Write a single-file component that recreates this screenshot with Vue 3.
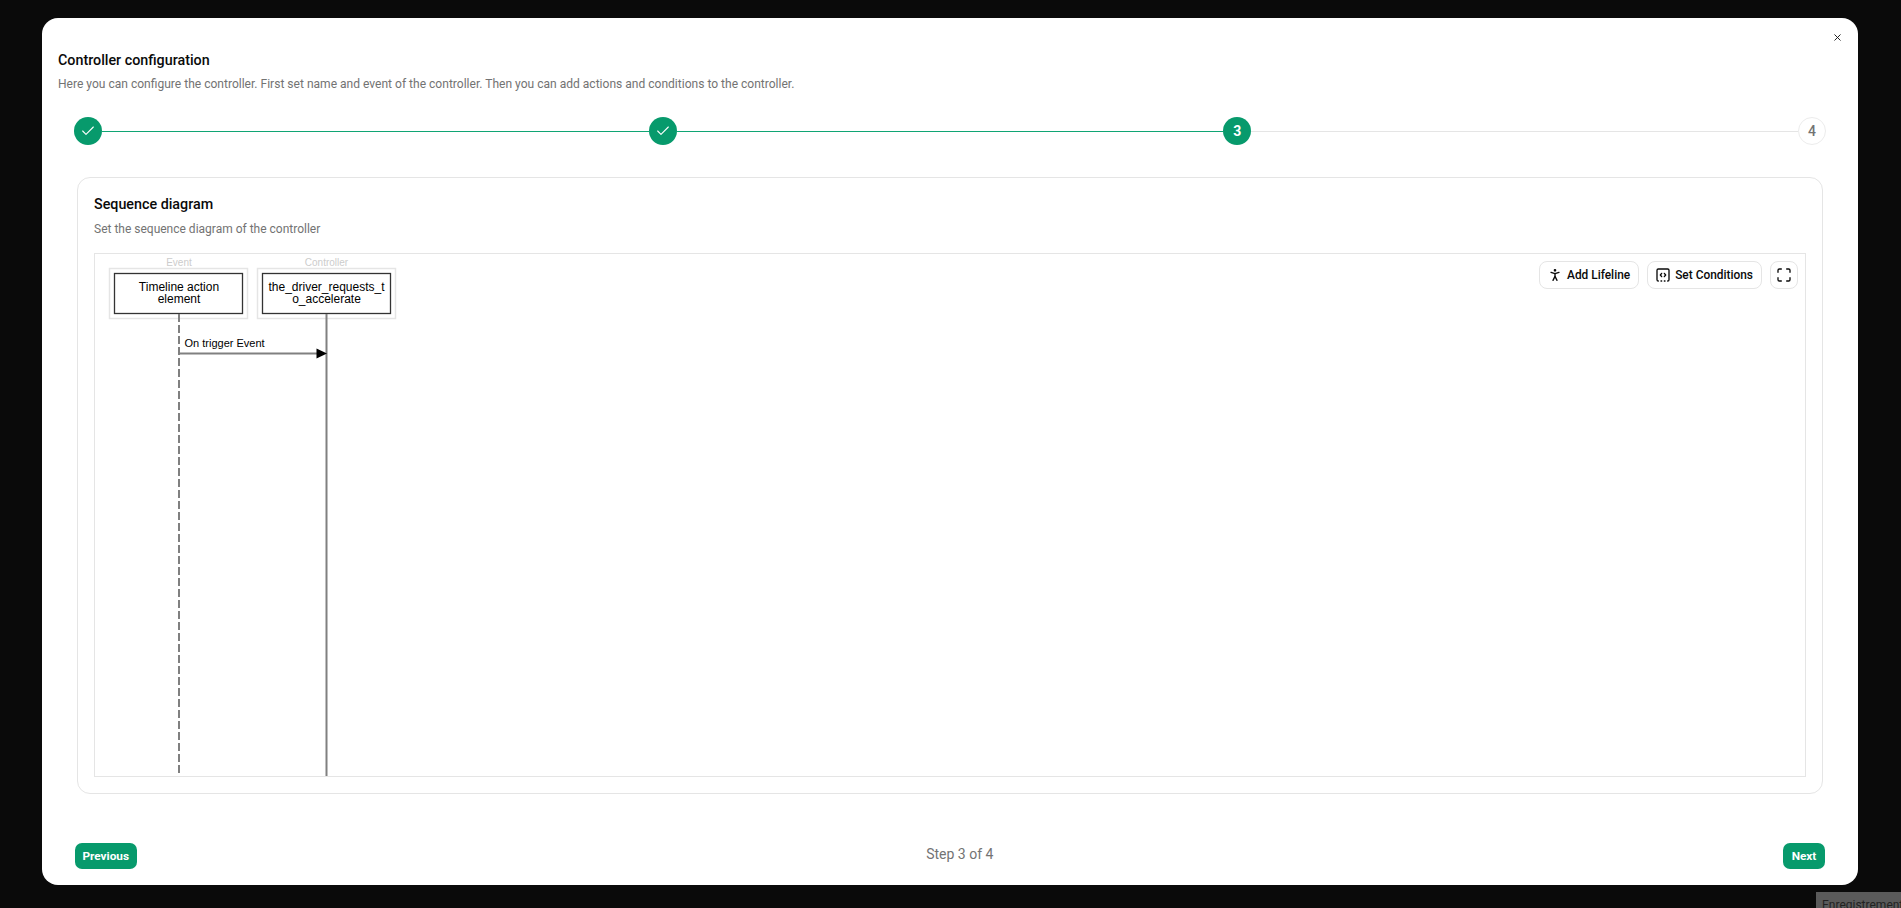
<script setup>
const steps = [
  { id: 1, state: 'done' },
  { id: 2, state: 'done' },
  { id: 3, state: 'current' },
  { id: 4, state: 'todo' }
]
</script>

<template>
  <div class="page">
    <div class="modal">
      <button class="close" aria-label="Close">
        <svg viewBox="0 0 24 24" width="11" height="11" fill="none" stroke="currentColor" stroke-width="2" stroke-linecap="round"><path d="M18 6 6 18"/><path d="m6 6 12 12"/></svg>
      </button>
      <header class="head">
        <h2>Controller configuration</h2>
        <p>Here you can configure the controller. First set name and event of the controller. Then you can add actions and conditions to the controller.</p>
      </header>
      <div class="stepper">
        <template v-for="(s, i) in steps" :key="s.id">
          <div class="dot" :class="s.state">
            <svg v-if="s.state === 'done'" viewBox="0 0 24 24" width="16" height="16" fill="none" stroke="currentColor" stroke-width="1.6" stroke-linecap="round" stroke-linejoin="round"><path d="M20 6 9 17l-5-5"/></svg>
            <span v-else>{{ s.id }}</span>
          </div>
          <div v-if="i < steps.length - 1" class="line" :class="{ on: s.state === 'done' }"></div>
        </template>
      </div>
      <section class="card">
        <h3>Sequence diagram</h3>
        <p class="sub">Set the sequence diagram of the controller</p>
        <div class="canvas">
          <svg class="diagram" width="340" height="524" viewBox="0 0 340 524">
            <text x="84" y="12" class="role">Event</text>
            <rect x="14.5" y="14.5" width="138" height="50" class="outer"/>
            <rect x="19.5" y="19.5" width="128" height="40" class="inner"/>
            <text x="84" y="37" class="name">Timeline action</text>
            <text x="84" y="49" class="name">element</text>
            <line x1="84" y1="60" x2="84" y2="524" class="life" stroke-dasharray="8 3"/>

            <text x="231.5" y="12" class="role">Controller</text>
            <rect x="162.5" y="14.5" width="138" height="50" class="outer"/>
            <rect x="167.5" y="19.5" width="128" height="40" class="inner"/>
            <text x="231.5" y="37" class="name">the_driver_requests_t</text>
            <text x="231.5" y="49" class="name">o_accelerate</text>
            <line x1="231.5" y1="60" x2="231.5" y2="524" class="life"/>

            <text x="89.5" y="93" class="msg">On trigger Event</text>
            <line x1="84" y1="99.5" x2="223" y2="99.5" class="life"/>
            <path d="M221.5 94.5 232 99.5 221.5 104.5Z" fill="#000"/>
          </svg>
          <div class="tools">
            <button class="tool">
              <svg viewBox="0 0 24 24" width="16" height="16" fill="none" stroke="currentColor" stroke-width="2" stroke-linecap="round" stroke-linejoin="round"><circle cx="12" cy="5" r="1"/><path d="m9 20 3-6 3 6"/><path d="m6 8 6 2 6-2"/><path d="M12 10v4"/></svg>
              Add Lifeline
            </button>
            <button class="tool">
              <svg viewBox="0 0 24 24" width="16" height="16" fill="none" stroke="currentColor" stroke-width="2" stroke-linecap="round" stroke-linejoin="round"><path d="M10 9.5 8 12l2 2.5"/><path d="M14 21h1"/><path d="m14 9.5 2 2.5-2 2.5"/><path d="M5 21a2 2 0 0 1-2-2V5a2 2 0 0 1 2-2h14a2 2 0 0 1 2 2v14a2 2 0 0 1-2 2"/><path d="M9 21h1"/></svg>
              Set Conditions
            </button>
            <button class="tool square">
              <svg viewBox="0 0 24 24" width="16" height="16" fill="none" stroke="currentColor" stroke-width="2" stroke-linecap="round" stroke-linejoin="round"><path d="M8 3H5a2 2 0 0 0-2 2v3"/><path d="M21 8V5a2 2 0 0 0-2-2h-3"/><path d="M3 16v3a2 2 0 0 0 2 2h3"/><path d="M16 21h3a2 2 0 0 0 2-2v-3"/></svg>
            </button>
          </div>
        </div>
      </section>
      <footer class="foot">
        <button class="primary">Previous</button>
        <span class="count">Step 3 of 4</span>
        <button class="primary">Next</button>
      </footer>
    </div>
    <div class="toast">Enregistrement...</div>
  </div>
</template>

<style>
html, body { margin: 0; background: #0a0a0a; }
</style>

<style scoped>
.page {
  position: relative;
  height: 908px;
  overflow: hidden;
  background: #0a0a0a;
  box-sizing: border-box;
  padding: 18px 43px 23px 42px;
  font-family: Roboto, "Noto Sans", sans-serif;
}
.modal {
  position: relative;
  height: 100%;
  background: #fff;
  border-radius: 16px;
  box-sizing: border-box;
  padding: 33px 16px 16px 16px;
  display: flex;
  flex-direction: column;
}
.close {
  position: absolute;
  top: 14px;
  right: 15px;
  padding: 0;
  border: 0;
  background: none;
  color: #111;
  display: flex;
}
.head h2 {
  margin: 0;
  font-size: 14.3px;
  line-height: 18px;
  font-weight: 500;
  color: #0a0a0a;
}
.head p {
  margin: 6px 0 0;
  font-size: 12.05px;
  line-height: 18px;
  color: #737373;
}
.stepper {
  display: flex;
  align-items: center;
  margin: 24px 16px 32px 16px;
}
.dot {
  width: 28px;
  height: 28px;
  border-radius: 50%;
  flex: none;
  display: flex;
  align-items: center;
  justify-content: center;
  box-sizing: border-box;
  font-size: 14px;
}
.dot.done, .dot.current {
  background: #079a6c;
  color: #fff;
}
.dot.current { font-weight: 700; }
.dot.todo {
  border: 1px solid #ececec;
  color: #737373;
  font-weight: 500;
}
.line {
  flex: 1;
  height: 1px;
  background: #e5e5e5;
}
.line.on { background: #10a574; }
.card {
  flex: 1;
  margin: 0 19px 0 19px;
  border: 1px solid #e5e5e5;
  border-radius: 13px;
  padding: 16px;
  display: flex;
  flex-direction: column;
  min-height: 0;
}
.card h3 {
  margin: 0;
  font-size: 14.3px;
  line-height: 20px;
  font-weight: 500;
  color: #0a0a0a;
}
.card .sub {
  margin: 6px 0 0;
  font-size: 12px;
  line-height: 18px;
  color: #737373;
}
.canvas {
  position: relative;
  flex: 1;
  margin-top: 15px;
  border: 1px solid #e5e5e5;
  overflow: hidden;
}
.diagram { display: block; }
.role {
  font: 10px "Liberation Sans", Arial, sans-serif;
  fill: #ccc;
  text-anchor: middle;
}
.name {
  font: 12px "Liberation Sans", Arial, sans-serif;
  fill: #000;
  text-anchor: middle;
}
.msg {
  font: 11px "Liberation Sans", Arial, sans-serif;
  fill: #000;
}
.outer { fill: #fff; stroke: #e5e5e5; stroke-width: 1.5; }
.inner { fill: #fff; stroke: #333; stroke-width: 1.3; }
.life { stroke: #808080; stroke-width: 2; }
.tools {
  position: absolute;
  top: 7px;
  right: 7px;
  display: flex;
  gap: 8px;
}
.tool {
  height: 28px;
  box-sizing: border-box;
  padding: 0 8px 0 7px;
  display: flex;
  align-items: center;
  gap: 4px;
  border: 1px solid #e5e5e5;
  border-radius: 8px;
  background: #fff;
  color: #0a0a0a;
  font: 500 11.9px Roboto, sans-serif;
}
.tool.square { width: 28px; padding: 0; justify-content: center; }
.foot {
  margin: 49px 17px 0 17px;
  display: flex;
  align-items: center;
  justify-content: space-between;
}
.primary {
  height: 26px;
  min-width: 42px;
  padding: 0 7.5px;
  border: 0;
  border-radius: 7px;
  background: #079a6c;
  color: #fff;
  font: 700 11.8px Roboto, sans-serif;
}
.count {
  font-size: 14px;
  color: #737373;
  margin-bottom: 5px;
}
.toast {
  position: absolute;
  left: 1816px;
  top: 892px;
  width: 120px;
  height: 30px;
  background: #5a5a5a;
  color: #222;
  font-size: 12px;
  padding: 6px;
  white-space: nowrap;
}
</style>
